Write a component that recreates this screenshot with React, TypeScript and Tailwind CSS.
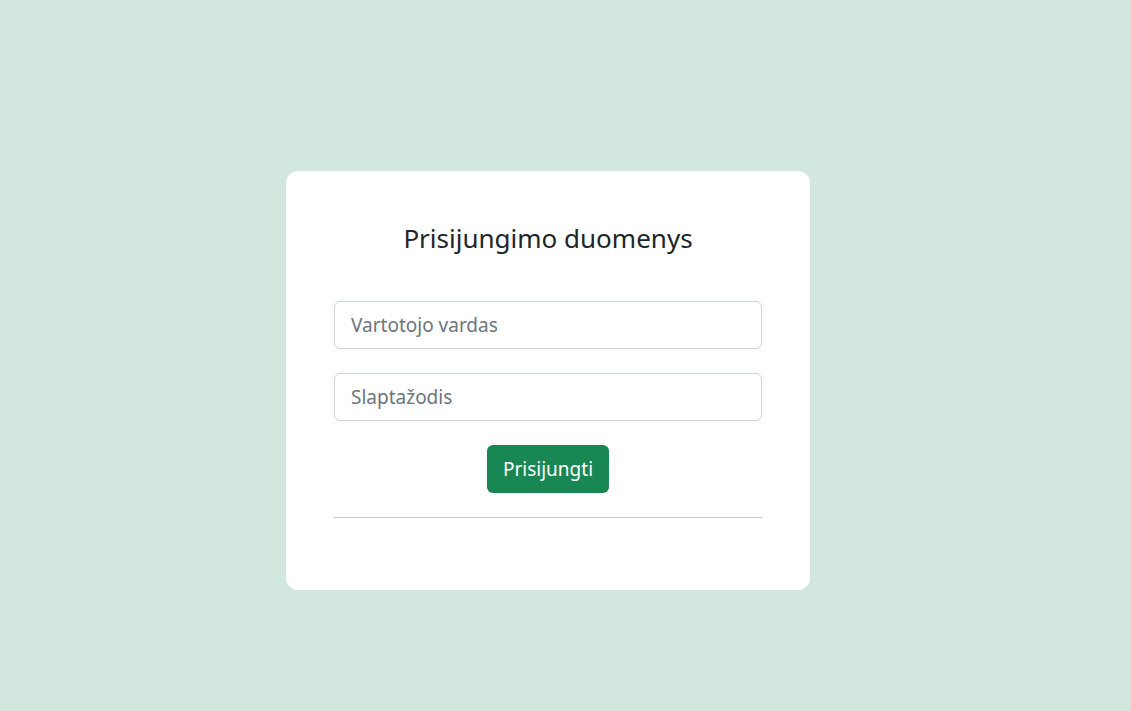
export default function App() {
  return (
    <div className="flex min-h-[711px] w-full items-start justify-center bg-[#d2e7de] pt-[171px] pr-[35px] font-['Noto_Sans',sans-serif] text-[#212529]">
      <div className="w-[524px] rounded-xl bg-white px-12 pt-12 pb-[72px]">
        <h3 className="mb-[44px] text-center text-[26px] leading-[38px]">Prisijungimo duomenys</h3>
        <form className="flex flex-col" onSubmit={(e) => e.preventDefault()}>
          <input
            type="text"
            placeholder="Vartotojo vardas"
            className="mb-6 h-12 w-full rounded-md border border-[#ced4da] px-4 text-[19px] text-[#212529] placeholder:text-[#6c757d] focus:outline-none"
          />
          <input
            type="password"
            placeholder="Slaptažodis"
            className="mb-6 h-12 w-full rounded-md border border-[#ced4da] px-4 text-[19px] text-[#212529] placeholder:text-[#6c757d] focus:outline-none"
          />
          <div className="flex justify-center">
            <button
              type="submit"
              className="h-12 w-[122px] rounded-md bg-[#198754] text-[19px] text-white"
            >
              Prisijungti
            </button>
          </div>
        </form>
        <hr className="mt-6 border-t border-[#c8c8c8]" />
      </div>
    </div>
  );
}
